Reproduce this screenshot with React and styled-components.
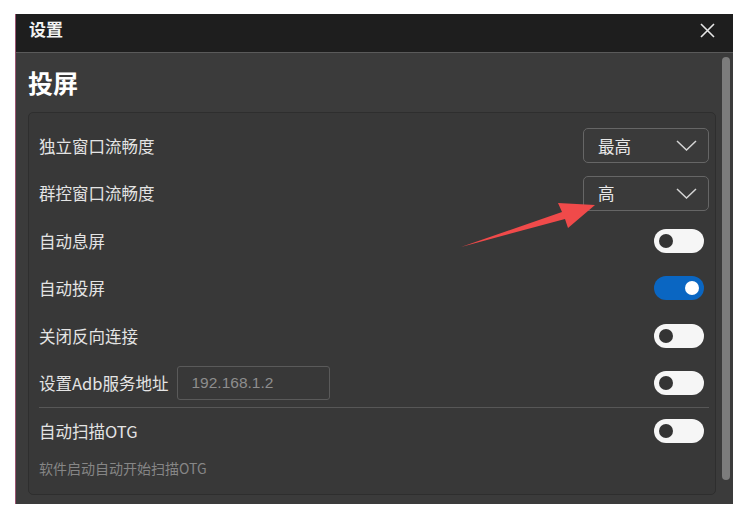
import React from 'react'
import styled, { createGlobalStyle } from 'styled-components'

const GlobalStyle = createGlobalStyle`
    html, body {
        margin:0;
        padding:0;
        background:#ffffff;
    }
    body {
        font-family:"Noto Sans CJK SC", "Noto Sans", sans-serif;
    }
`

const Page = styled.div`
    position:relative;
    width:747px;
    height:519px;
    box-sizing:border-box;
    padding:14px 14px 15px 15px;
    background:#ffffff;
`

const Window = styled.div`
    width:718px;
    height:490px;
    display:flex;
    flex-direction:column;
    background:#3b3b3b;
    border-left:1px solid #9a5470;
    box-sizing:border-box;
`

const TitleBar = styled.div`
    height:38px;
    flex-shrink:0;
    display:flex;
    align-items:center;
    justify-content:space-between;
    padding:0 18px 0 13px;
    background:#1e1e1e;
    border-bottom:1px solid #5a5a5a;
`

const TitleText = styled.span`
    margin-bottom:10px;
    font-size:17px;
    font-weight:700;
    color:#f2f2f2;
`

const CloseIcon = styled.svg`
    width:15px;
    height:15px;
    margin-bottom:6px;
`

const Body = styled.div`
    flex:1;
    min-height:0;
    display:flex;
`

const Main = styled.div`
    flex:1;
    display:flex;
    flex-direction:column;
    padding:0 0 9px 12px;
`

const Heading = styled.h2`
    margin:0;
    height:59px;
    display:flex;
    align-items:center;
    padding-bottom:1px;
    box-sizing:border-box;
    font-size:25px;
    font-weight:700;
    color:#ffffff;
`

const Panel = styled.div`
    flex:1;
    background:#383838;
    border:1px solid #2e2e2e;
    border-radius:5px;
    padding:9px 6px 0 10px;
`

const Row = styled.div`
    height:${p => p.$h || 47.5}px;
    display:flex;
    align-items:center;
    justify-content:space-between;
`

const LabelGroup = styled.div`
    display:flex;
    align-items:center;
    gap:9px;
`

const Label = styled.span`
    font-size:16.5px;
    color:#e4e4e4;
`

const Select = styled.div`
    width:126px;
    height:35px;
    box-sizing:border-box;
    display:flex;
    align-items:center;
    justify-content:space-between;
    padding:0 11px 0 14px;
    border:1px solid #666666;
    border-radius:5px;
    background:#3a3a3a;
    font-size:16.5px;
    color:#e8e8e8;
`

const Chevron = styled.svg`
    width:21px;
    height:11px;
`

const TextInput = styled.div`
    width:153px;
    height:34px;
    box-sizing:border-box;
    display:flex;
    align-items:center;
    padding-left:13px;
    border:1px solid #5a5a5a;
    border-radius:3px;
    font-family:"Liberation Sans", "Noto Sans", sans-serif;
    font-size:15.5px;
    color:#8e8e8e;
`

const Toggle = styled.div`
    position:relative;
    width:50px;
    height:24px;
    margin-right:5px;
    border-radius:12px;
    background:${p => (p.$on ? '#0a66c2' : '#f6f6f6')};

    &::after {
        content:"";
        position:absolute;
        top:5px;
        ${p => (p.$on ? 'right:5px;' : 'left:5px;')}
        width:14px;
        height:14px;
        border-radius:50%;
        background:${p => (p.$on ? '#ffffff' : '#343434')};
    }
`

const Divider = styled.div`
    height:1px;
    background:#575757;
`

const Hint = styled.div`
    margin-top:4px;
    line-height:20px;
    font-size:14px;
    color:#868686;
`

const ScrollTrack = styled.div`
    width:17px;
    flex-shrink:0;
    padding:4px 0 0 6px;
    box-sizing:border-box;
`

const ScrollThumb = styled.div`
    width:8px;
    height:423px;
    border-radius:4px;
    background:#7c7c7c;
`

const ArrowOverlay = styled.svg`
    position:absolute;
    left:0;
    top:0;
    width:747px;
    height:519px;
    pointer-events:none;
`

const DropDown = ({ value }) => (
    <Select>
        <span>{value}</span>
        <Chevron viewBox="0 0 21 11">
            <path d="M1 1 L10.5 10 L20 1" fill="none" stroke="#d4d4d4" strokeWidth="1.5" />
        </Chevron>
    </Select>
)

const App = () => {
    return (
        <>
            <GlobalStyle />
            <Page>
                <Window>
                    <TitleBar>
                        <TitleText>设置</TitleText>
                        <CloseIcon viewBox="0 0 15 15">
                            <path d="M1 1 L14 14 M14 1 L1 14" stroke="#e6e6e6" strokeWidth="1.6" />
                        </CloseIcon>
                    </TitleBar>
                    <Body>
                        <Main>
                            <Heading>投屏</Heading>
                            <Panel>
                                <Row>
                                    <Label>独立窗口流畅度</Label>
                                    <DropDown value="最高" />
                                </Row>
                                <Row>
                                    <Label>群控窗口流畅度</Label>
                                    <DropDown value="高" />
                                </Row>
                                <Row>
                                    <Label>自动息屏</Label>
                                    <Toggle />
                                </Row>
                                <Row>
                                    <Label>自动投屏</Label>
                                    <Toggle $on />
                                </Row>
                                <Row>
                                    <Label>关闭反向连接</Label>
                                    <Toggle />
                                </Row>
                                <Row>
                                    <LabelGroup>
                                        <Label>设置Adb服务地址</Label>
                                        <TextInput>192.168.1.2</TextInput>
                                    </LabelGroup>
                                    <Toggle />
                                </Row>
                                <Divider />
                                <Row $h={46}>
                                    <Label>自动扫描OTG</Label>
                                    <Toggle />
                                </Row>
                                <Hint>软件启动自动开始扫描OTG</Hint>
                            </Panel>
                        </Main>
                        <ScrollTrack>
                            <ScrollThumb />
                        </ScrollTrack>
                    </Body>
                </Window>
                <ArrowOverlay viewBox="0 0 747 519">
                    <polygon
                        points="461,247 562,212 558,203 595,205 568,228 565,219"
                        fill="#f04a4a"
                    />
                </ArrowOverlay>
            </Page>
        </>
    )
}

export default App
